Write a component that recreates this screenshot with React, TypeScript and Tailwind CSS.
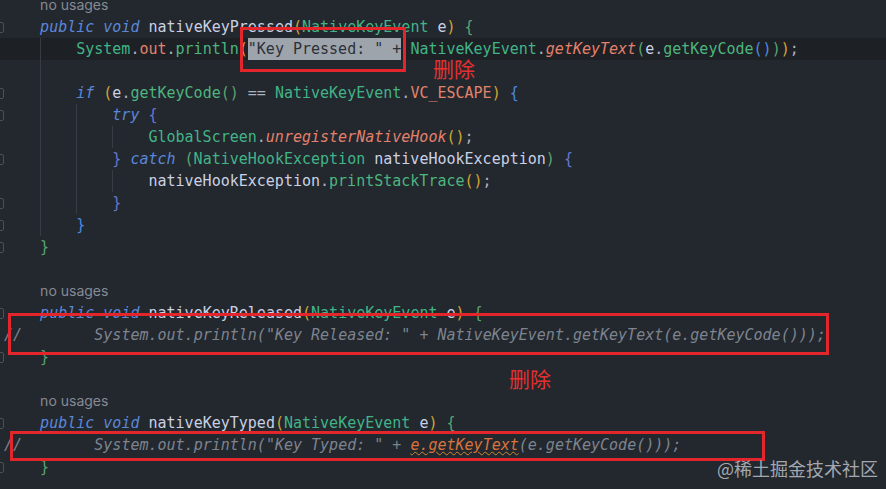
import React from "react";

type Tok = [string, string?];

type Row =
  | { kind: "hint" }
  | { kind: "empty"; indent?: number }
  | { kind: "code"; indent: number; fold?: boolean; current?: boolean; toks: Tok[] };

const KW = "italic text-[#5b87d9]";
const ID = "text-[#c9d1e3]";
const TYPE = "text-[#41b487]";
const CALL = "text-[#4db57e]";
const FIELD = "text-[#e0846b]";
const STATIC = "italic text-[#e3806c]";
const GOLD = "text-[#d3a532]";
const GREEN = "text-[#5aa46e]";
const BLUE = "text-[#4a8be0]";
const PURPLE = "text-[#6678cf]";
const PUN = "text-[#aab3c2]";
const CMT = "italic text-[#7d848e]";

const sig = (name: string): Tok[] => [
  ["public", KW],
  [" "],
  ["void", KW],
  [" "],
  [name, ID],
  ["(", GOLD],
  ["NativeKeyEvent", TYPE],
  [" "],
  ["e", ID],
  [")", GOLD],
  [" "],
  ["{", GREEN],
];

const rows: Row[] = [
  { kind: "hint" },
  { kind: "code", indent: 1, fold: true, toks: sig("nativeKeyPressed") },
  {
    kind: "code",
    indent: 2,
    current: true,
    toks: [
      ["System", TYPE],
      [".", PUN],
      ["out", FIELD],
      [".", PUN],
      ["println", CALL],
      ["(", GOLD],
      ['"Key Pressed: " +', "sel"],
      [" "],
      ["NativeKeyEvent", TYPE],
      [".", PUN],
      ["getKeyText", STATIC],
      ["(", GREEN],
      ["e", ID],
      [".", PUN],
      ["getKeyCode", CALL],
      ["()", BLUE],
      [")", GREEN],
      [")", GOLD],
      [";", PUN],
    ],
  },
  { kind: "empty", indent: 2 },
  {
    kind: "code",
    indent: 2,
    fold: true,
    toks: [
      ["if", KW],
      [" "],
      ["(", GOLD],
      ["e", ID],
      [".", PUN],
      ["getKeyCode", CALL],
      ["()", GREEN],
      [" "],
      ["==", PUN],
      [" "],
      ["NativeKeyEvent", TYPE],
      [".", PUN],
      ["VC_ESCAPE", FIELD],
      [")", GOLD],
      [" "],
      ["{", BLUE],
    ],
  },
  { kind: "code", indent: 3, fold: true, toks: [["try", KW], [" "], ["{", PURPLE]] },
  {
    kind: "code",
    indent: 4,
    toks: [
      ["GlobalScreen", TYPE],
      [".", PUN],
      ["unregisterNativeHook", STATIC],
      ["()", GOLD],
      [";", PUN],
    ],
  },
  {
    kind: "code",
    indent: 3,
    fold: true,
    toks: [
      ["}", PURPLE],
      [" "],
      ["catch", KW],
      [" "],
      ["(", GREEN],
      ["NativeHookException", TYPE],
      [" "],
      ["nativeHookException", ID],
      [")", GREEN],
      [" "],
      ["{", PURPLE],
    ],
  },
  {
    kind: "code",
    indent: 4,
    toks: [
      ["nativeHookException", ID],
      [".", PUN],
      ["printStackTrace", CALL],
      ["()", GOLD],
      [";", PUN],
    ],
  },
  { kind: "code", indent: 3, fold: true, toks: [["}", PURPLE]] },
  { kind: "code", indent: 2, fold: true, toks: [["}", BLUE]] },
  { kind: "code", indent: 1, fold: true, toks: [["}", GREEN]] },
  { kind: "empty" },
  { kind: "hint" },
  { kind: "code", indent: 1, fold: true, toks: sig("nativeKeyReleased") },
  {
    kind: "code",
    indent: 0,
    toks: [['//        System.out.println("Key Released: " + NativeKeyEvent.getKeyText(e.getKeyCode()));', CMT]],
  },
  { kind: "code", indent: 1, fold: true, toks: [["}", GREEN]] },
  { kind: "empty" },
  { kind: "hint" },
  { kind: "code", indent: 1, fold: true, toks: sig("nativeKeyTyped") },
  {
    kind: "code",
    indent: 0,
    toks: [
      ['//        System.out.println("Key Typed: " + ', CMT],
      ["e.getKeyText", "err"],
      ["(e.getKeyCode()));", CMT],
    ],
  },
  { kind: "code", indent: 1, fold: true, toks: [["}", GREEN]] },
];

const Gutter = ({ fold }: { fold?: boolean }) => (
  <div className="w-[4px] h-full shrink-0 overflow-hidden flex items-center">
    {fold && <div className="w-[10px] h-[11px] shrink-0 -ml-[6px] border border-[#4a4f58] rounded-[2px]" />}
  </div>
);

const Indent = ({ levels }: { levels: number }) => (
  <>
    {Array.from({ length: levels }).map((_, i) => (
      <span
        key={i}
        className={`inline-block w-[4ch] h-[22px] shrink-0 ${i > 0 ? "border-l border-[#363b44]" : ""}`}
      />
    ))}
  </>
);

const tokClass = (c?: string) => {
  if (c === "sel") return "bg-[#9ea4ac] text-[#2c3037] h-[22px] inline-flex items-center";
  if (c === "err")
    return "italic text-[#d8743d] underline decoration-wavy decoration-[#c98a32] decoration-1 underline-offset-[1px]";
  return c ?? ID;
};

const CodeRow = ({ row }: { row: Row }) => {
  if (row.kind === "hint") {
    return (
      <div className="flex h-[22px] items-center">
        <Gutter />
        <Indent levels={1} />
        <span className="font-['Inter',sans-serif] text-[14px] text-[#858b94]">no usages</span>
      </div>
    );
  }
  if (row.kind === "empty") {
    return (
      <div className="flex h-[22px] items-center">
        <Gutter />
        <Indent levels={row.indent ?? 0} />
      </div>
    );
  }
  return (
    <div className={`flex h-[22px] items-center whitespace-pre ${row.current ? "bg-[#1d2025]" : ""}`}>
      <Gutter fold={row.fold} />
      <Indent levels={row.indent} />
      {row.toks.map(([t, c], i) => (
        <span key={i} className={tokClass(c)}>
          {t}
        </span>
      ))}
    </div>
  );
};

export default function App() {
  return (
    <div className="relative w-[886px] h-[489px] overflow-hidden bg-[#23272e]">
      <div className="-mt-[6px] font-['DejaVu_Sans_Mono',monospace] text-[15px] leading-[22px]">
        {rows.map((r, i) => (
          <CodeRow key={i} row={r} />
        ))}
      </div>

      {/* annotations */}
      <div className="absolute left-[240px] top-[27px] w-[166px] h-[45px] border-[3px] border-[#e3262b]" />
      <div className="absolute left-[8px] top-[313px] w-[821px] h-[42px] border-[3px] border-[#e3262b]" />
      <div className="absolute left-[10px] top-[431px] w-[755px] h-[30px] border-[3px] border-[#e3262b]" />
      <span className="absolute left-[433px] top-[58px] text-[21px] leading-none text-[#e3312f] font-['Noto_Sans_CJK_SC',sans-serif]">
        删除
      </span>
      <span className="absolute left-[509px] top-[368px] text-[21px] leading-none text-[#e3312f] font-['Noto_Sans_CJK_SC',sans-serif]">
        删除
      </span>
      <span className="absolute left-[717px] top-[459px] text-[18px] leading-none text-[#a4a8ae] font-['Noto_Sans_CJK_SC',sans-serif]">
        @稀土掘金技术社区
      </span>
    </div>
  );
}
